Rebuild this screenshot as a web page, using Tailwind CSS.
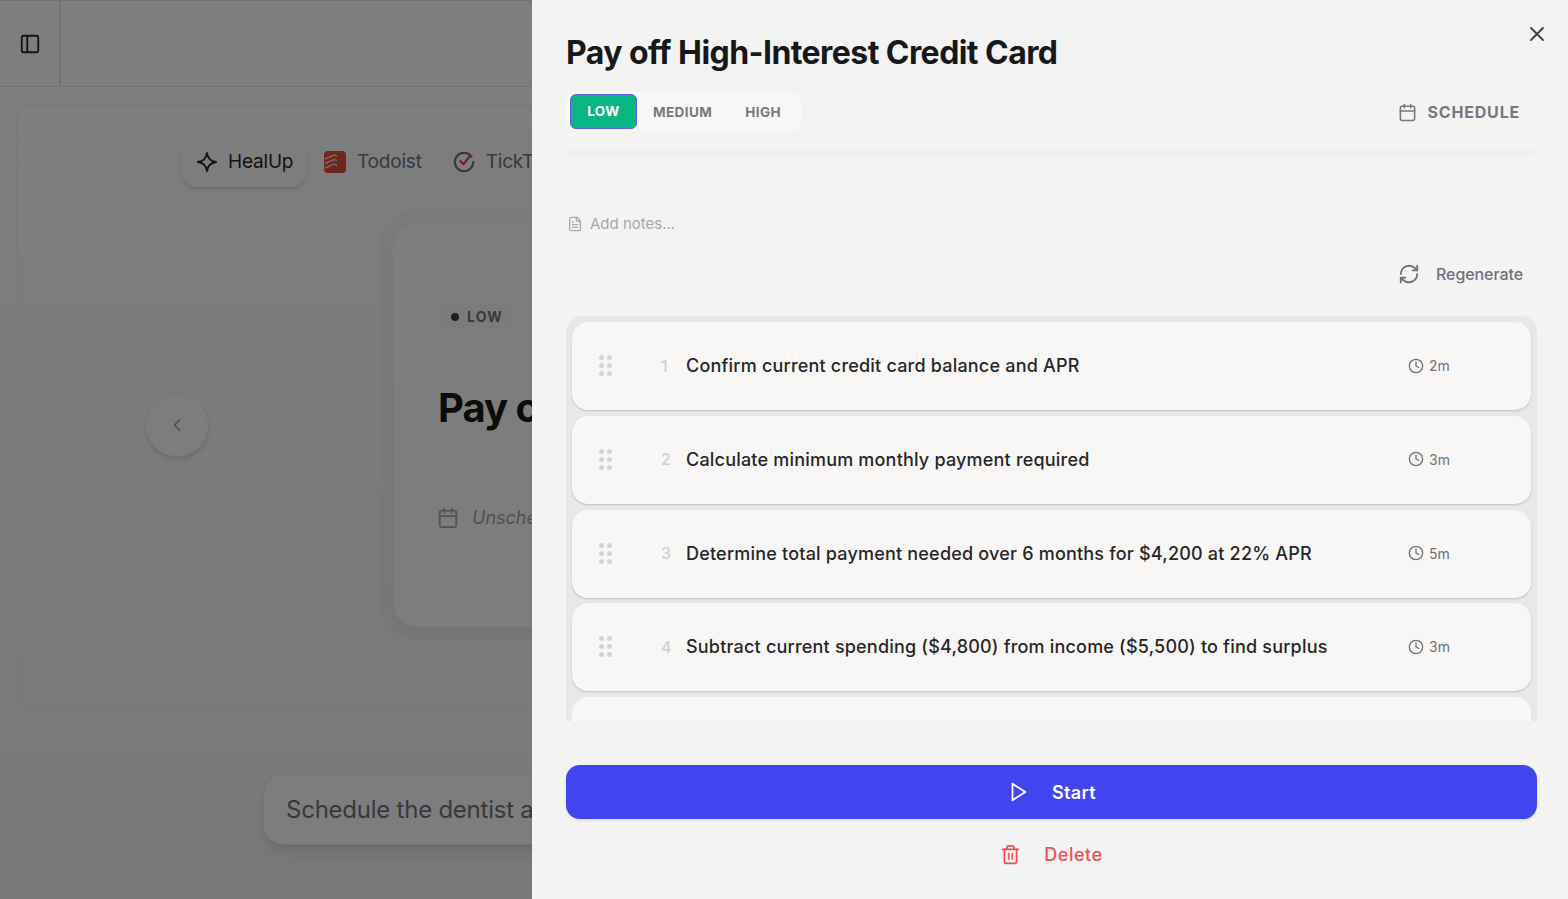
<!DOCTYPE html>
<html lang="en">
  <head>
    <meta charset="UTF-8" />
    <meta name="viewport" content="width=device-width, initial-scale=1.0" />
    <title>Pay off High-Interest Credit Card</title>
    <script src="https://cdn.jsdelivr.net/npm/@tailwindcss/browser@4"></script>
  </head>
  <body class="h-[899px] overflow-hidden flex font-['Inter',sans-serif] text-[#18181b]">
    <!-- Page behind the drawer -->
    <div class="relative w-[532px] h-[899px] shrink-0 overflow-hidden bg-linear-to-b from-[#fdfdfd] to-[#f2f2f2]">
      <div class="w-[1568px]">
        <div class="h-[87px] border-b border-t border-[#e4e4e4] flex">
          <div class="w-[61px] border-r-2 border-[#e4e4e4] flex items-center justify-center">
            <svg class="w-[22px] h-[22px] text-[#27272a]" viewBox="0 0 24 24" fill="none" stroke="currentColor" stroke-width="2" stroke-linecap="round" stroke-linejoin="round"><rect x="3" y="3" width="18" height="18" rx="2" /><path d="M9 3v18" /></svg>
          </div>
        </div>

        <div class="ml-4 mt-[17px] w-[1536px] h-[607px] rounded-2xl border border-[#f0f0f0]">
          <div class="ml-[165px] mt-[32px] flex items-center text-[19px] tracking-[-0.01em]">
            <div class="w-[124px] h-[50px] rounded-[14px] bg-[#fafafa] shadow-md flex items-center pl-[14px] gap-[10px] text-[#27272a]">
              <svg class="w-[22px] h-[22px]" viewBox="0 0 24 24" fill="none" stroke="currentColor" stroke-width="2" stroke-linejoin="round"><path d="M12 2c.8 6.200 3.800 9.200 10 10-6.200.8-9.200 3.800-10 10-.8-6.200-3.800-9.200-10-10 6.200-.8 9.200-3.800 10-10Z" /></svg>
              <span>HealUp</span>
            </div>
            <div class="flex items-center gap-[11px] ml-[18px] text-[#6b7280]">
              <svg class="w-[22px] h-[22px]" viewBox="0 0 22 22"><rect width="22" height="22" rx="4" fill="#dc4c3e" /><path d="M1 8l9-4 3 1M1 12.500l9-4 3 1M1 17l9-4 3 1" fill="none" stroke="#f6cfc9" stroke-width="1.500" /></svg>
              <span>Todoist</span>
            </div>
            <div class="flex items-center gap-[11px] ml-[31px] text-[#6b7280]">
              <svg class="w-[22px] h-[22px]" viewBox="0 0 24 24" fill="none" stroke-width="2.400" stroke-linecap="round" stroke-linejoin="round"><path d="M20 6A10 10 0 1 0 22 12" stroke="#6b7280" /><path d="M8 11l3.500 3.500L18 6" stroke="#dc4c3e" /></svg>
              <span>TickTick</span>
            </div>
          </div>

          <div class="ml-[128px] mt-[36px] flex items-center">
            <div class="w-16 h-16 rounded-full bg-[#fafafa] border border-[#ebebeb] shadow-md flex items-center justify-center text-[#a1a1aa] -mt-px">
              <svg class="w-5 h-5" viewBox="0 0 24 24" fill="none" stroke="currentColor" stroke-width="2" stroke-linecap="round" stroke-linejoin="round"><path d="m15 18-6-6 6-6" /></svg>
            </div>
            <div class="ml-[184px] w-[800px] h-[404px] rounded-3xl bg-[#fafafa] shadow-[0_0_0_14px_rgba(0,0,0,0.02),0_6px_12px_rgba(0,0,0,0.04)] pl-[45px] pt-[81px]">
              <div class="w-[76px] h-[25px] rounded-full bg-[#f7f7f7] flex items-center pl-[13px] gap-[8px] text-[14px] font-bold tracking-[0.08em] text-[#6b7280]">
                <span class="w-2 h-2 rounded-full bg-[#3f3f46]"></span>
                <span>LOW</span>
              </div>
              <h1 class="mt-[54px] text-[40px] leading-[50px] font-bold tracking-tight whitespace-nowrap">Pay off High-Interest Credit Card</h1>
              <div class="mt-[71px] flex items-center gap-[13px] text-[#a1a1aa]">
                <svg class="w-[22px] h-[22px] -ml-px text-[#a1a1aa]" viewBox="0 0 24 24" fill="none" stroke="currentColor" stroke-width="2" stroke-linecap="round" stroke-linejoin="round"><path d="M8 2v4" /><path d="M16 2v4" /><rect x="3" y="4" width="18" height="18" rx="2" /><path d="M3 10h18" /></svg>
                <span class="text-[18px] italic">Unscheduled</span>
              </div>
            </div>
          </div>
        </div>

        <div class="ml-[263px] mt-[63px] w-[800px] h-[71px] rounded-[20px] border border-[#e9e9e9] bg-[#fafafa] shadow-lg flex items-center pl-[22px] text-[24px] tracking-[-0.01em] text-[#71717a] whitespace-nowrap">
          Schedule the dentist appointment
        </div>
      </div>
      <!-- Dim overlay -->
      <div class="absolute inset-0 bg-black/50"></div>
    </div>

    <!-- Drawer -->
    <div class="relative flex-1 h-[899px] bg-[#f3f3f3] pl-[34px] pr-[31px] flex flex-col">
      <button class="absolute top-[22px] right-[19px] text-[#3f3f46]">
        <svg class="w-6 h-6" viewBox="0 0 24 24" fill="none" stroke="currentColor" stroke-width="1.800" stroke-linecap="round" stroke-linejoin="round"><path d="M18 6 6 18" /><path d="m6 6 12 12" /></svg>
      </button>

      <h2 class="mt-[32px] h-[42px] text-[32px] leading-[42px] font-bold tracking-[-0.0175em] whitespace-nowrap">Pay off High-Interest Credit Card</h2>

      <div class="mt-[18px] flex items-center justify-between h-[40px]">
        <div class="w-[235px] h-[40px] rounded-xl bg-[#f8f8f7] flex items-start pt-[2px] pl-1 text-[13.500px] font-bold tracking-[0.03em] text-[#78787e]">
          <div class="w-[67px] h-[35px] rounded-md border border-[#5b5ff0] bg-[#0ab683] text-white flex items-center justify-center">LOW</div>
          <div class="ml-4 h-[37px] flex items-center">MEDIUM</div>
          <div class="ml-[33px] h-[37px] flex items-center">HIGH</div>
        </div>
        <div class="flex items-center gap-[11px] mr-[17px] text-[16px] font-bold tracking-[0.05em] text-[#78787e]">
          <svg class="w-[19px] h-[19px]" viewBox="0 0 24 24" fill="none" stroke="currentColor" stroke-width="2" stroke-linecap="round" stroke-linejoin="round"><path d="M8 2v4" /><path d="M16 2v4" /><rect x="3" y="4" width="18" height="18" rx="2" /><path d="M3 10h18" /></svg>
          <span>SCHEDULE</span>
        </div>
      </div>

      <div class="mt-[18px] h-[5px] ml-px mr-[2px] rounded-full bg-[#efefee]"></div>

      <div class="mt-[59px] h-[20px] flex items-center gap-[7px] ml-px text-[#a8a8ad] text-[15px]">
        <svg class="w-4 h-4" viewBox="0 0 24 24" fill="none" stroke="currentColor" stroke-width="2" stroke-linecap="round" stroke-linejoin="round"><path d="M15 2H6a2 2 0 0 0-2 2v16a2 2 0 0 0 2 2h12a2 2 0 0 0 2-2V7Z" /><path d="M14 2v4a2 2 0 0 0 2 2h4" /><path d="M10 9H8" /><path d="M16 13H8" /><path d="M16 17H8" /></svg>
        <span>Add notes...</span>
      </div>

      <div class="mt-[30px] h-[20px] flex items-center justify-end gap-[16px] mr-[14px] text-[16px] font-medium tracking-[-0.005em] text-[#71717a]">
        <svg class="w-[22px] h-[22px]" viewBox="0 0 24 24" fill="none" stroke="currentColor" stroke-width="2" stroke-linecap="round" stroke-linejoin="round"><path d="M3 12a9 9 0 0 1 9-9 9.750 9.750 0 0 1 6.740 2.740L21 8" /><path d="M21 3v5h-5" /><path d="M21 12a9 9 0 0 1-9 9 9.750 9.750 0 0 1-6.740-2.740L3 16" /><path d="M8 16H3v5" /></svg>
        <span>Regenerate</span>
      </div>

      <!-- Step list -->
      <div class="mt-[32px] h-[405px] rounded-t-2xl bg-[#e8e8e8] px-[6px] pt-[6px] overflow-hidden flex flex-col gap-[5.750px] text-[18px] font-medium tracking-[0.2px] text-[#27272a]">
        <div class="h-[88px] shrink-0 rounded-2xl bg-[#f8f7f5] shadow-[0_1px_2px_rgba(0,0,0,0.18)] flex items-center pl-[27px] pb-px">
          <div class="grid grid-cols-2 gap-[3px] w-[12px]">
            <span class="w-[5px] h-[5px] rounded-full bg-[#d4d4d4]"></span><span class="w-[5px] h-[5px] rounded-full bg-[#d4d4d4]"></span>
            <span class="w-[5px] h-[5px] rounded-full bg-[#d4d4d4]"></span><span class="w-[5px] h-[5px] rounded-full bg-[#d4d4d4]"></span>
            <span class="w-[5px] h-[5px] rounded-full bg-[#d4d4d4]"></span><span class="w-[5px] h-[5px] rounded-full bg-[#d4d4d4]"></span>
          </div>
          <span class="w-[25px] ml-[50px] text-[16px] text-[#d0d0d0]">1</span>
          <span class="flex-1 whitespace-nowrap">Confirm current credit card balance and APR</span>
          <div class="w-[123px] flex items-center gap-[5px] text-[14px] font-normal tracking-normal text-[#71717a]">
            <svg class="w-4 h-4" viewBox="0 0 24 24" fill="none" stroke="currentColor" stroke-width="2" stroke-linecap="round" stroke-linejoin="round"><circle cx="12" cy="12" r="10" /><path d="M12 6v6l4 2" /></svg>
            <span>2m</span>
          </div>
        </div>
        <div class="h-[88px] shrink-0 rounded-2xl bg-[#f8f7f5] shadow-[0_1px_2px_rgba(0,0,0,0.18)] flex items-center pl-[27px] pb-px">
          <div class="grid grid-cols-2 gap-[3px] w-[12px]">
            <span class="w-[5px] h-[5px] rounded-full bg-[#d4d4d4]"></span><span class="w-[5px] h-[5px] rounded-full bg-[#d4d4d4]"></span>
            <span class="w-[5px] h-[5px] rounded-full bg-[#d4d4d4]"></span><span class="w-[5px] h-[5px] rounded-full bg-[#d4d4d4]"></span>
            <span class="w-[5px] h-[5px] rounded-full bg-[#d4d4d4]"></span><span class="w-[5px] h-[5px] rounded-full bg-[#d4d4d4]"></span>
          </div>
          <span class="w-[25px] ml-[50px] text-[16px] text-[#d0d0d0]">2</span>
          <span class="flex-1 whitespace-nowrap">Calculate minimum monthly payment required</span>
          <div class="w-[123px] flex items-center gap-[5px] text-[14px] font-normal tracking-normal text-[#71717a]">
            <svg class="w-4 h-4" viewBox="0 0 24 24" fill="none" stroke="currentColor" stroke-width="2" stroke-linecap="round" stroke-linejoin="round"><circle cx="12" cy="12" r="10" /><path d="M12 6v6l4 2" /></svg>
            <span>3m</span>
          </div>
        </div>
        <div class="h-[88px] shrink-0 rounded-2xl bg-[#f8f7f5] shadow-[0_1px_2px_rgba(0,0,0,0.18)] flex items-center pl-[27px] pb-px">
          <div class="grid grid-cols-2 gap-[3px] w-[12px]">
            <span class="w-[5px] h-[5px] rounded-full bg-[#d4d4d4]"></span><span class="w-[5px] h-[5px] rounded-full bg-[#d4d4d4]"></span>
            <span class="w-[5px] h-[5px] rounded-full bg-[#d4d4d4]"></span><span class="w-[5px] h-[5px] rounded-full bg-[#d4d4d4]"></span>
            <span class="w-[5px] h-[5px] rounded-full bg-[#d4d4d4]"></span><span class="w-[5px] h-[5px] rounded-full bg-[#d4d4d4]"></span>
          </div>
          <span class="w-[25px] ml-[50px] text-[16px] text-[#d0d0d0]">3</span>
          <span class="flex-1 whitespace-nowrap">Determine total payment needed over 6 months for $4,200 at 22% APR</span>
          <div class="w-[123px] flex items-center gap-[5px] text-[14px] font-normal tracking-normal text-[#71717a]">
            <svg class="w-4 h-4" viewBox="0 0 24 24" fill="none" stroke="currentColor" stroke-width="2" stroke-linecap="round" stroke-linejoin="round"><circle cx="12" cy="12" r="10" /><path d="M12 6v6l4 2" /></svg>
            <span>5m</span>
          </div>
        </div>
        <div class="h-[88px] shrink-0 rounded-2xl bg-[#f8f7f5] shadow-[0_1px_2px_rgba(0,0,0,0.18)] flex items-center pl-[27px] pb-px">
          <div class="grid grid-cols-2 gap-[3px] w-[12px]">
            <span class="w-[5px] h-[5px] rounded-full bg-[#d4d4d4]"></span><span class="w-[5px] h-[5px] rounded-full bg-[#d4d4d4]"></span>
            <span class="w-[5px] h-[5px] rounded-full bg-[#d4d4d4]"></span><span class="w-[5px] h-[5px] rounded-full bg-[#d4d4d4]"></span>
            <span class="w-[5px] h-[5px] rounded-full bg-[#d4d4d4]"></span><span class="w-[5px] h-[5px] rounded-full bg-[#d4d4d4]"></span>
          </div>
          <span class="w-[25px] ml-[50px] text-[16px] text-[#d0d0d0]">4</span>
          <span class="flex-1 whitespace-nowrap">Subtract current spending ($4,800) from income ($5,500) to find surplus</span>
          <div class="w-[123px] flex items-center gap-[5px] text-[14px] font-normal tracking-normal text-[#71717a]">
            <svg class="w-4 h-4" viewBox="0 0 24 24" fill="none" stroke="currentColor" stroke-width="2" stroke-linecap="round" stroke-linejoin="round"><circle cx="12" cy="12" r="10" /><path d="M12 6v6l4 2" /></svg>
            <span>3m</span>
          </div>
        </div>
        <div class="h-[88px] shrink-0 rounded-2xl bg-[#f8f7f5]"></div>
      </div>

      <button class="mt-[44px] h-[54px] rounded-[14px] bg-[#4045ef] shadow-sm text-white text-[18px] font-semibold tracking-[0.02em] flex items-center justify-center gap-[23px]">
        <svg class="w-[22px] h-[22px]" viewBox="0 0 24 24" fill="none" stroke="currentColor" stroke-width="2" stroke-linecap="round" stroke-linejoin="round"><polygon points="6 3 20 12 6 21 6 3" /></svg>
        <span>Start</span>
      </button>

      <button class="mt-[14px] h-[42px] text-[#ef5050] text-[18px] font-medium tracking-[0.03em] flex items-center justify-center gap-[23px]">
        <svg class="w-[21px] h-[21px]" viewBox="0 0 24 24" fill="none" stroke="currentColor" stroke-width="2" stroke-linecap="round" stroke-linejoin="round"><path d="M3 6h18" /><path d="M19 6v14c0 1-1 2-2 2H7c-1 0-2-1-2-2V6" /><path d="M8 6V4c0-1 1-2 2-2h4c1 0 2 1 2 2v2" /><path d="M10 11v6" /><path d="M14 11v6" /></svg>
        <span>Delete</span>
      </button>
    </div>
  </body>
</html>
